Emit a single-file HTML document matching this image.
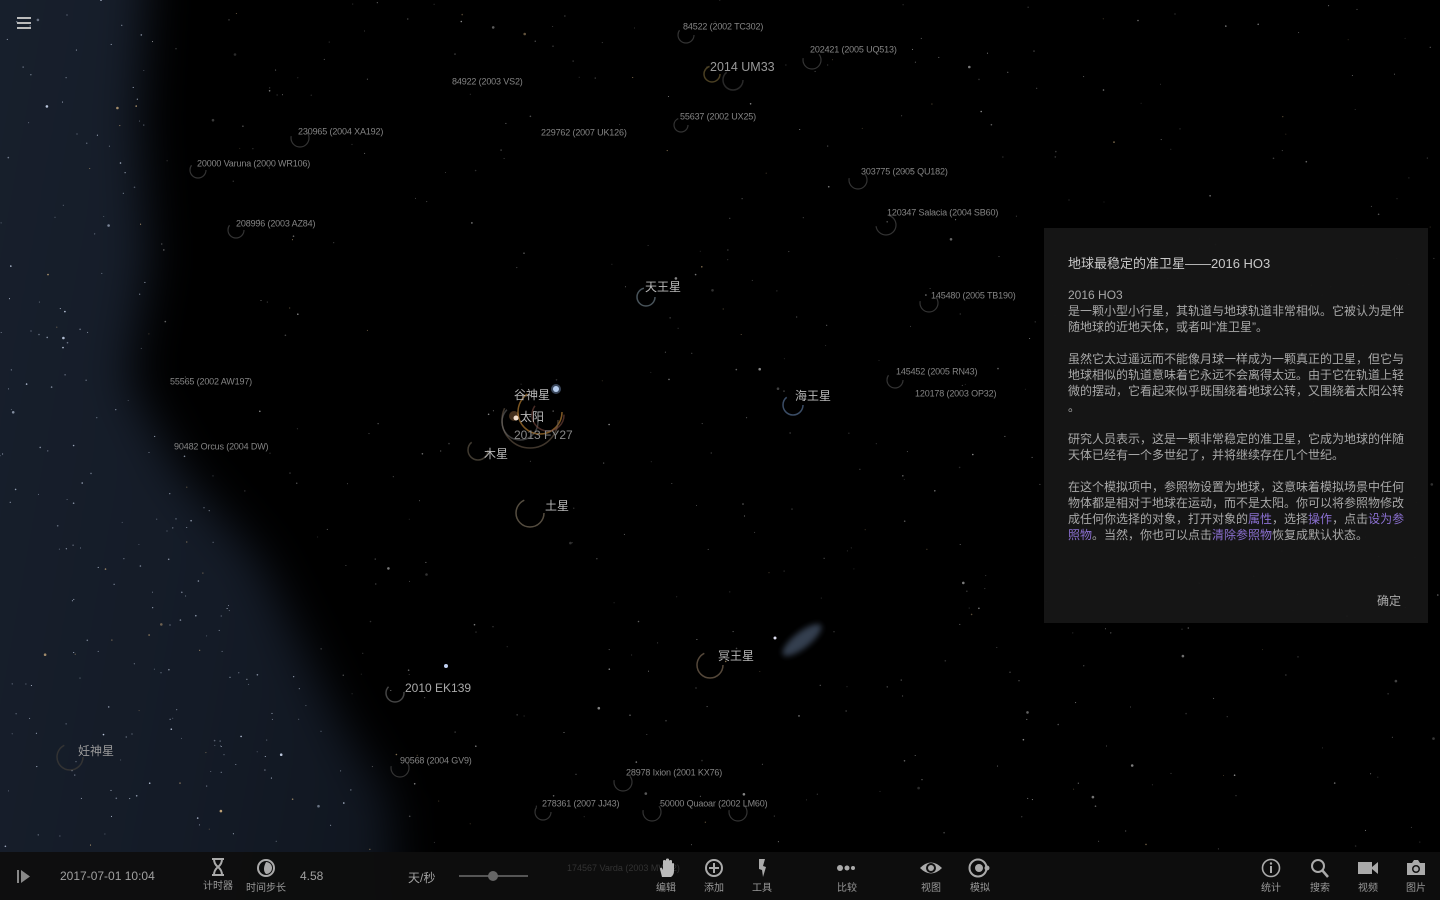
<!DOCTYPE html>
<html><head><meta charset="utf-8">
<style>
*{margin:0;padding:0;box-sizing:border-box}
html,body{width:1440px;height:900px;overflow:hidden;background:#000;font-family:"Liberation Sans","Noto Sans CJK SC",sans-serif;position:relative}
#bg{position:absolute;left:0;top:0;width:1440px;height:900px;overflow:hidden}
#mwwrap{position:absolute;left:0;top:0;width:1440px;height:900px;filter:blur(22px)}
#mw{position:absolute;left:-60px;top:-60px;width:600px;height:1020px;background:linear-gradient(100deg,#18202d 0%,#141b27 50%,#0d121a 100%);clip-path:polygon(0 0,210px 0,200px 180px,210px 320px,190px 440px,240px 530px,320px 620px,360px 700px,400px 780px,450px 860px,460px 1020px,0 1020px)}
#sky{position:absolute;left:0;top:0;overflow:hidden;display:block}
.l{position:absolute;white-space:nowrap;line-height:1;transform:translateY(-50%)}
.s{font-size:9px;color:#858585;letter-spacing:-0.15px}
.b{font-size:12px;color:#b8b8b8}
#panel{position:absolute;left:1044px;top:228px;width:384px;height:395px;background:rgba(22,22,22,0.96)}
#panel .t{position:absolute;left:24px;top:25px;font-size:13px;color:#c8c8c8}
#panel .bd{position:absolute;left:24px;top:59px;font-size:12px;line-height:16px;color:#a8a8a8;white-space:nowrap}
#panel a{color:#8a6fd0;text-decoration:none}
#panel .ok{position:absolute;right:27px;top:364px;font-size:12px;color:#aaa}
#bar{position:absolute;left:0;top:852px;width:1440px;height:48px;background:rgba(14,14,14,0.95);overflow:hidden}
.bt{position:absolute;top:0;width:44px;text-align:center;color:#999;font-size:10px}
.bt svg{display:block;margin:6px auto 0}
.bt span{display:block;margin-top:1px}
.tx{position:absolute;color:#a0a0a0;font-size:12px;top:17px}
#wrap{position:absolute;left:0;top:0;width:1440px;height:900px;overflow:hidden}
</style></head><body><div id="wrap">
<div id="bg"><div id="mwwrap"><div id="mw"></div></div>
<div style="position:absolute;left:778px;top:632px;width:48px;height:16px;background:#3a4658;transform:rotate(-38deg);border-radius:50%;filter:blur(3px);opacity:0.9"></div></div>
<svg id="sky" width="1440" height="900">
<g id="stars"></g>
<g fill="none" stroke-width="1.5">
<circle cx="540" cy="412" r="22" stroke="#b07a30" opacity="0.7" stroke-dasharray="90 60"/>
<circle cx="530" cy="420" r="28" stroke="#6a5a4a" opacity="0.6" stroke-dasharray="100 80"/>
<circle cx="520" cy="422" r="18" stroke="#777" opacity="0.5" stroke-dasharray="70 50"/>
<circle cx="548" cy="415" r="16" stroke="#7a4a40" opacity="0.6" stroke-dasharray="60 40"/>
<circle cx="530" cy="513" r="14" stroke="#6a6050" opacity="0.8" stroke-dasharray="60 30"/>
<circle cx="478" cy="450" r="10" stroke="#6a6050" opacity="0.6" stroke-dasharray="40 25"/>
<circle cx="710" cy="665" r="13" stroke="#6a5a48" opacity="0.8" stroke-dasharray="55 30"/>
<circle cx="646" cy="297" r="9" stroke="#5a6870" opacity="0.8" stroke-dasharray="40 20"/>
<circle cx="793" cy="405" r="10" stroke="#4a6080" opacity="0.8" stroke-dasharray="40 25"/>
<circle cx="712" cy="74" r="8" stroke="#6a5a30" opacity="0.7" stroke-dasharray="35 20"/>
<circle cx="733" cy="80" r="10" stroke="#3a3a3a" opacity="0.7" stroke-dasharray="40 25"/>
<circle cx="395" cy="693" r="9" stroke="#444" stroke-dasharray="35 20"/>
<circle cx="70" cy="757" r="13" stroke="#333" stroke-dasharray="55 30"/>
</g>
<g fill="none" stroke="#333" stroke-width="1.2" stroke-dasharray="30 20">
<circle cx="686" cy="35" r="8"/><circle cx="812" cy="60" r="9"/><circle cx="681" cy="125" r="7"/><circle cx="300" cy="138" r="9"/>
<circle cx="198" cy="170" r="8"/><circle cx="858" cy="180" r="9"/><circle cx="886" cy="225" r="10"/><circle cx="236" cy="230" r="8"/>
<circle cx="929" cy="303" r="9"/><circle cx="895" cy="380" r="8"/><circle cx="400" cy="768" r="9"/><circle cx="652" cy="812" r="9"/><circle cx="738" cy="812" r="9"/><circle cx="543" cy="812" r="8"/><circle cx="623" cy="782" r="9"/>
</g>
<circle cx="556" cy="389" r="3" fill="#cfe0f5"/><circle cx="556" cy="389" r="5" fill="#8fb0e0" opacity="0.4"/>
<circle cx="516" cy="418" r="2.5" fill="#fff"/><circle cx="514" cy="416" r="5" fill="#e0a060" opacity="0.3"/>
<circle cx="446" cy="666" r="2" fill="#c0d0f0"/>
<circle cx="775" cy="638" r="1.5" fill="#dde"/>
</svg>
<div class="l s" style="left:683px;top:27px">84522 (2002 TC302)</div>
<div class="l s" style="left:810px;top:50px">202421 (2005 UQ513)</div>
<div class="l s" style="left:452px;top:82px">84922 (2003 VS2)</div>
<div class="l s" style="left:680px;top:117px">55637 (2002 UX25)</div>
<div class="l s" style="left:298px;top:132px">230965 (2004 XA192)</div>
<div class="l s" style="left:541px;top:133px">229762 (2007 UK126)</div>
<div class="l s" style="left:197px;top:164px">20000 Varuna (2000 WR106)</div>
<div class="l s" style="left:861px;top:172px">303775 (2005 QU182)</div>
<div class="l s" style="left:887px;top:213px">120347 Salacia (2004 SB60)</div>
<div class="l s" style="left:236px;top:224px">208996 (2003 AZ84)</div>
<div class="l s" style="left:931px;top:296px">145480 (2005 TB190)</div>
<div class="l s" style="left:896px;top:372px">145452 (2005 RN43)</div>
<div class="l s" style="left:170px;top:382px">55565 (2002 AW197)</div>
<div class="l s" style="left:915px;top:394px">120178 (2003 OP32)</div>
<div class="l s" style="left:174px;top:447px">90482 Orcus (2004 DW)</div>
<div class="l s" style="left:400px;top:761px">90568 (2004 GV9)</div>
<div class="l s" style="left:626px;top:773px">28978 Ixion (2001 KX76)</div>
<div class="l s" style="left:542px;top:804px">278361 (2007 JJ43)</div>
<div class="l s" style="left:660px;top:804px">50000 Quaoar (2002 LM60)</div>
<div class="l b" style="left:710px;top:67px;font-size:12.5px;color:#999">2014 UM33</div>
<div class="l b" style="left:645px;top:287px">天王星</div>
<div class="l b" style="left:514px;top:395px">谷神星</div>
<div class="l b" style="left:520px;top:417px">太阳</div>
<div class="l b" style="left:514px;top:435px;color:#888">2013 FY27</div>
<div class="l b" style="left:795px;top:396px">海王星</div>
<div class="l b" style="left:484px;top:454px">木星</div>
<div class="l b" style="left:545px;top:506px">土星</div>
<div class="l b" style="left:718px;top:656px">冥王星</div>
<div class="l b" style="left:405px;top:688px;color:#aaa">2010 EK139</div>
<div class="l b" style="left:78px;top:751px;color:#999">妊神星</div>
<svg style="position:absolute;left:17px;top:17px" width="14" height="13"><rect y="0" width="14" height="2" fill="#bbb"/><rect y="5" width="14" height="2" fill="#bbb"/><rect y="10" width="14" height="2" fill="#bbb"/></svg>
<div id="panel">
<div class="t">地球最稳定的准卫星——2016 HO3</div>
<div class="bd">2016 HO3<br>是一颗小型小行星，其轨道与地球轨道非常相似。它被认为是伴<br>随地球的近地天体，或者叫“准卫星”。<br><br>虽然它太过遥远而不能像月球一样成为一颗真正的卫星，但它与<br>地球相似的轨道意味着它永远不会离得太远。由于它在轨道上轻<br>微的摆动，它看起来似乎既围绕着地球公转，又围绕着太阳公转<br>。<br><br>研究人员表示，这是一颗非常稳定的准卫星，它成为地球的伴随<br>天体已经有一个多世纪了，并将继续存在几个世纪。<br><br>在这个模拟项中，参照物设置为地球，这意味着模拟场景中任何<br>物体都是相对于地球在运动，而不是太阳。你可以将参照物修改<br>成任何你选择的对象，打开对象的<a>属性</a>，选择<a>操作</a>，点击<a>设为参</a><br><a>照物</a>。当然，你也可以点击<a>清除参照物</a>恢复成默认状态。</div>
<div class="ok">确定</div>
</div>
<div id="bar">
<svg style="position:absolute;left:17px;top:18px" width="14" height="13"><rect x="0" y="0" width="2" height="13" fill="#888"/><path d="M4,0 L13,6.5 L4,13Z" fill="#888"/></svg>
<div class="tx" style="left:60px">2017-07-01 10:04</div>
<div class="bt" style="left:196px"><svg width="14" height="18" viewBox="0 0 14 18"><path d="M1,1 H13 M1,17 H13 M3,1 Q3,6 7,9 Q3,12 3,17 M11,1 Q11,6 7,9 Q11,12 11,17" stroke="#aaa" stroke-width="2" fill="none"/></svg><span>计时器</span></div>
<div class="bt" style="left:244px"><svg width="20" height="20"><circle cx="10" cy="10" r="8" stroke="#aaa" stroke-width="2" fill="none"/><path d="M10,4 A6,6 0 0 1 10,16 Q6,12 10,4Z" fill="#aaa"/></svg><span>时间步长</span></div>
<div class="tx" style="left:300px">4.58</div>
<div class="tx" style="left:408px">天/秒</div>
<div style="position:absolute;left:459px;top:23px;width:69px;height:2px;background:#555"></div>
<div style="position:absolute;left:488px;top:19px;width:10px;height:10px;border-radius:50%;background:#666"></div>
<div style="position:absolute;left:567px;top:11px;font-size:9px;color:#333">174567 Varda (2003 MW12)</div>
<div class="bt" style="left:644px"><svg width="18" height="20"><path d="M5,19 L3,11 Q3,9 5,10 L6,12 V3 Q6,2 7.5,2 Q9,2 9,3 V9 V1.5 Q9,0.5 10.5,0.5 Q12,0.5 12,1.5 V9 V3 Q12,2 13.5,2 Q15,2 15,3 V10 V6 Q15,5 16,5 Q17,5 17,6 V13 Q17,17 14,19Z" fill="#bbb"/></svg><span>编辑</span></div>
<div class="bt" style="left:692px"><svg width="20" height="20"><circle cx="10" cy="10" r="8" stroke="#aaa" stroke-width="2" fill="none"/><path d="M10,5V15M5,10H15" stroke="#aaa" stroke-width="2"/></svg><span>添加</span></div>
<div class="bt" style="left:740px"><svg width="12" height="20"><path d="M3,1 H9 L7,8 L10,9 L7,19 L6,12 L3,11Z" fill="#aaa"/></svg><span>工具</span></div>
<div class="bt" style="left:825px"><svg width="22" height="20"><circle cx="4" cy="10" r="3" fill="#aaa"/><circle cx="11" cy="10" r="2.5" fill="#aaa"/><circle cx="17" cy="10" r="2" fill="#aaa"/></svg><span>比较</span></div>
<div class="bt" style="left:909px"><svg width="24" height="20"><path d="M1,10 Q12,-1 23,10 Q12,21 1,10Z" fill="#aaa"/><circle cx="12" cy="10" r="5" fill="#111"/><circle cx="12" cy="10" r="3" fill="#aaa"/></svg><span>视图</span></div>
<div class="bt" style="left:958px"><svg width="24" height="20"><circle cx="10" cy="10" r="8.5" stroke="#aaa" stroke-width="2" fill="none"/><circle cx="11" cy="10" r="4" fill="#aaa"/><circle cx="19" cy="10" r="2.5" fill="#aaa"/></svg><span>模拟</span></div>
<div class="bt" style="left:1249px"><svg width="20" height="20"><circle cx="10" cy="10" r="8.5" stroke="#aaa" stroke-width="1.6" fill="none"/><circle cx="10" cy="5.5" r="1.2" fill="#aaa"/><rect x="9" y="8" width="2" height="7" fill="#aaa"/></svg><span>统计</span></div>
<div class="bt" style="left:1298px"><svg width="20" height="20"><circle cx="8" cy="8" r="6" stroke="#aaa" stroke-width="2" fill="none"/><path d="M12,12 L18,19" stroke="#aaa" stroke-width="2.5"/></svg><span>搜索</span></div>
<div class="bt" style="left:1346px"><svg width="22" height="20"><rect x="1" y="4" width="14" height="12" fill="#aaa"/><path d="M15,9 L21,4 V16 L15,11Z" fill="#aaa"/></svg><span>视频</span></div>
<div class="bt" style="left:1394px"><svg width="22" height="20"><path d="M2,5 H7 L9,2 H13 L15,5 H20 V17 H2Z" fill="#aaa"/><circle cx="11" cy="11" r="4" fill="#111"/><circle cx="11" cy="11" r="2.5" fill="#aaa"/></svg><span>图片</span></div>
</div>
</div>
<script>
(function(){var s=12345;function r(){s=(s*16807)%2147483647;return s/2147483647;}
var g=document.getElementById('stars'),h='';
for(var i=0;i<1400;i++){var x=r()*1440,y=r()*852;var edge=150+Math.max(0,(y-300))*0.45;var inMW=x<edge;
if(!inMW&&r()<0.6)continue;var big=r();var rad=big<0.05?1.3:(big<0.3?0.8:0.55);var o=inMW?0.35+r()*0.6:0.2+r()*0.5;
var c=r()<0.08?'#d0b080':(inMW?'#c8d4ea':'#ccc');h+='<circle cx="'+x.toFixed(1)+'" cy="'+y.toFixed(1)+'" r="'+rad+'" fill="'+c+'" opacity="'+o.toFixed(2)+'"/>';}
g.innerHTML=h;})();
</script>
</body></html>
